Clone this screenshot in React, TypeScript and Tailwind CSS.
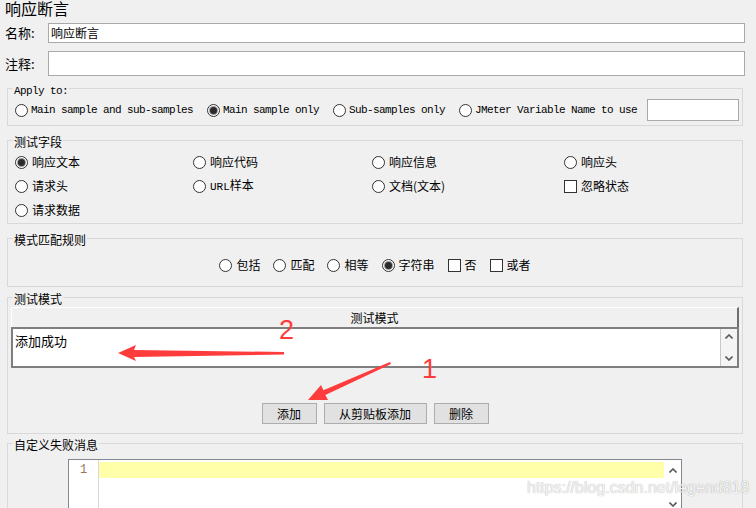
import React from "react";

const cjk = "font-['Noto_Sans_CJK_SC','Microsoft_YaHei',sans-serif]";
const mono = "font-['Liberation_Mono','NSimSun',monospace]";

function Radio({ checked = false }: { checked?: boolean }) {
  return (
    <span className="w-[13px] h-[13px] rounded-full border border-[#333] bg-white flex items-center justify-center shrink-0">
      {checked && <span className="w-[7px] h-[7px] rounded-full bg-[#2b2b2b] ring-1 ring-[#9a9a9a]" />}
    </span>
  );
}

function Check() {
  return <span className="w-[13px] h-[13px] border border-[#333] bg-white shrink-0" />;
}

function Chevron({ down = false }: { down?: boolean }) {
  return (
    <svg width="8" height="5" viewBox="0 0 8 5">
      <polyline
        points={down ? "0.5,0.5 4,4 7.5,0.5" : "0.5,4.5 4,1 7.5,4.5"}
        fill="none"
        stroke="#5a5a5a"
        strokeWidth="1.6"
      />
    </svg>
  );
}

function Group({
  title,
  titleClass = "",
  className = "",
  children,
}: {
  title: string;
  titleClass?: string;
  className?: string;
  children: React.ReactNode;
}) {
  return (
    <div className={`relative ml-[7px] mr-[13px] border border-[#d9d9d9] ${className}`}>
      <span className={`absolute left-[5px] px-[1px] bg-[#f0f0f0] whitespace-nowrap ${titleClass}`}>{title}</span>
      {children}
    </div>
  );
}

function Opt({ label, checked, box }: { label: React.ReactNode; checked?: boolean; box?: boolean }) {
  return (
    <div className="flex items-center gap-[4px] whitespace-nowrap">
      {box ? <Check /> : <Radio checked={checked} />}
      <span>{label}</span>
    </div>
  );
}

export default function App() {
  return (
    <div className={`relative w-[756px] h-[508px] overflow-hidden bg-[#f0f0f0] text-black text-[12px] ${cjk}`}>
      <div className="pl-[5px] h-[16px] text-[16px] leading-[16px]">响应断言</div>

      <div className="mt-[7px] flex items-center h-[20px] mr-[11px]">
        <span className="w-[48px] shrink-0 pl-[5px] text-[13px]">名称:</span>
        <div className="flex-1 min-w-0 h-[20px] border border-[#a9a9a9] bg-white pl-[2px] leading-[18px]">响应断言</div>
      </div>
      <div className="mt-[8px] flex items-center h-[25px] mr-[11px]">
        <span className="w-[48px] shrink-0 pl-[5px] text-[13px]">注释:</span>
        <div className="flex-1 min-w-0 h-[25px] border border-[#a9a9a9] bg-white" />
      </div>

      <Group title="Apply to:" titleClass={`-top-[5px] text-[11px] leading-[14px] tracking-[-0.6px] ${mono}`} className="mt-[12px]">
        <div className={`pt-[10px] pb-[4px] pl-[7px] h-[36px] flex items-center text-[11px] tracking-[-0.6px] ${mono}`}>
          <div className="flex items-center gap-[14px]">
            <div className="flex items-center gap-[3px] whitespace-nowrap"><Radio /><span>Main sample and sub-samples</span></div>
            <div className="flex items-center gap-[3px] whitespace-nowrap"><Radio checked /><span>Main sample only</span></div>
            <div className="flex items-center gap-[3px] whitespace-nowrap"><Radio /><span>Sub-samples only</span></div>
            <div className="flex items-center gap-[3px] whitespace-nowrap"><Radio /><span>JMeter Variable Name to use</span></div>
          </div>
          <div className="ml-[10px] w-[92px] h-[22px] border border-[#a9a9a9] bg-white" />
        </div>
      </Group>

      <Group title="测试字段" titleClass="-top-[7px] leading-[16px]" className="mt-[14px]">
        <div className="pt-[9px] pb-[1px] pl-[7px] grid grid-cols-[178px_179px_192px_1fr] auto-rows-[24px] items-center">
          <Opt label="响应文本" checked />
          <Opt label="响应代码" />
          <Opt label="响应信息" />
          <Opt label="响应头" />
          <Opt label="请求头" />
          <Opt label={<><span className={`text-[11px] ${mono}`}>URL</span>样本</>} />
          <Opt label="文档(文本)" />
          <Opt label="忽略状态" box />
          <Opt label="请求数据" />
        </div>
      </Group>

      <Group title="模式匹配规则" titleClass="-top-[7px] leading-[16px]" className="mt-[14px]">
        <div className="pt-[15px] pb-[9px] h-[47px] flex justify-center">
          <div className="h-[22px] flex items-center gap-[13px]">
            <Opt label="包括" />
            <Opt label="匹配" />
            <Opt label="相等" />
            <Opt label="字符串" checked />
            <Opt label="否" box />
            <Opt label="或者" box />
          </div>
        </div>
      </Group>

      <Group title="测试模式" titleClass="-top-[7px] leading-[16px]" className="mt-[10px]">
        <div className="pt-[9px] pb-[9px] pl-[3px] pr-[3px]">
          <div className="h-[20px] bg-[#f0f0f0] border-t border-l border-white border-r-2 border-r-[#6e6e6e] flex items-center justify-center">
            测试模式
          </div>
          <div className="h-[41px] border-2 border-[#7f7f7f] bg-white flex">
            <div className="flex-1 pl-[2px] pt-[4px] text-[13px] leading-[16px]">添加成功</div>
            <div className="w-[17px] border-l border-[#c8c8c8] bg-[#f4f4f4] flex flex-col items-center justify-between py-[5px]">
              <Chevron />
              <Chevron down />
            </div>
          </div>
          <div className="mt-[35px] flex justify-center gap-[7px]">
            <button className="w-[55px] h-[21px] border border-[#adadad] bg-[#e1e1e1] leading-[19px]">添加</button>
            <button className="w-[103px] h-[21px] border border-[#adadad] bg-[#e1e1e1] leading-[19px]">从剪贴板添加</button>
            <button className="w-[55px] h-[21px] border border-[#adadad] bg-[#e1e1e1] leading-[19px]">删除</button>
          </div>
        </div>
      </Group>

      <Group title="自定义失败消息" titleClass="-top-[7px] leading-[16px]" className="mt-[9px]">
        <div className="pt-[15px] pl-[60px]">
          <div className="w-[614px] h-[52px] border border-[#828790] bg-white flex">
            <div className={`w-[30px] border-r border-[#d9d9d9] pt-[2px] flex justify-center text-[12px] leading-[16px] text-[#9a7462] ${mono}`}>1</div>
            <div className="flex-1 pt-[2px]">
              <div className="h-[16px] bg-[#ffffaa]" />
            </div>
            <div className="w-[17px] flex flex-col items-center justify-between pt-[8px] pb-[3px]">
              <Chevron />
              <Chevron down />
            </div>
          </div>
        </div>
      </Group>

      <svg className="absolute inset-0 pointer-events-none" width="756" height="508" viewBox="0 0 756 508">
        <polygon
          points="118,353 136,345 134,350 284,352 284,354.5 134,357 136,361"
          fill="#ff3c3c"
        />
        <polygon
          points="308,400 321,385 323.4,390.3 390,362 391,364 325.4,394.9 328,400"
          fill="#ff3c3c"
        />
      </svg>
      <span className="absolute left-[279px] top-[317px] text-[27px] leading-[27px] text-[#ff3c3c] font-['Liberation_Sans',Arial,sans-serif]">2</span>
      <span className="absolute left-[422px] top-[356px] text-[27px] leading-[27px] text-[#ff3c3c] font-['Liberation_Sans',Arial,sans-serif]">1</span>

      <span className="absolute left-[527px] top-[479px] text-[16px] leading-[18px] text-white/90 font-['Liberation_Sans',Arial,sans-serif] [text-shadow:0_0_1px_rgba(0,0,0,0.45)] whitespace-nowrap">
        https://blog.csdn.net/legend818
      </span>
    </div>
  );
}
